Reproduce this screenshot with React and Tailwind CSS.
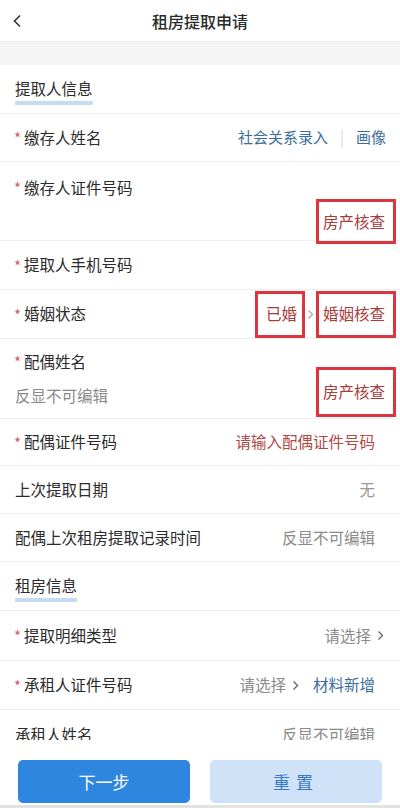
import React from "react";

const font = { fontFamily: '"Noto Sans CJK SC", "Noto Sans", sans-serif' };

function Star() {
  return <span className="mr-[3px] text-[15px] leading-none text-[#d65a60]">*</span>;
}

function Label({ req, children }) {
  return (
    <div className="flex items-center text-[15.5px] text-[#2b2b2b]">
      {req && <Star />}
      <span>{children}</span>
    </div>
  );
}

function Chevron({ className = "" }) {
  return (
    <svg width="7" height="11" viewBox="0 0 7 11" className={className}>
      <polyline points="1.5,1.5 5.5,5.5 1.5,9.5" fill="none" stroke="currentColor" strokeWidth="1.3" />
    </svg>
  );
}

function RedBox({ children, className = "" }) {
  return (
    <div className={`flex items-center justify-end border-[3px] border-[#d9363e] text-[15.5px] text-[#a83a3a] ${className}`}>
      {children}
    </div>
  );
}

function Section({ title, width }) {
  return (
    <div className="flex h-[49px] flex-col justify-center border-b border-[#efefef] px-[15px]">
      <div className="relative w-fit pt-[4px] text-[15.5px] text-[#2b2b2b]">
        {title}
        <div className="h-[4px] bg-[#c6dcf3]" style={{ width }} />
      </div>
    </div>
  );
}

export default function App() {
  return (
    <div className="flex h-[808px] w-[400px] flex-col overflow-hidden bg-white" style={font}>
      {/* header */}
      <div className="relative flex h-[42px] shrink-0 items-center justify-center border-b border-[#efefef]">
        <svg width="10" height="14" viewBox="0 0 10 14" className="absolute left-[12px] top-[14px] text-[#333]">
          <polyline points="8,1.5 2.5,7 8,12.5" fill="none" stroke="currentColor" strokeWidth="1.6" />
        </svg>
        <span className="text-[16px] font-medium text-[#2b2b2b]">租房提取申请</span>
      </div>
      <div className="h-[23px] shrink-0 bg-[#f5f5f5]" />

      <div className="flex-1 overflow-hidden">
        <Section title="提取人信息" width="78px" />

        <div className="flex h-[48px] items-center justify-between border-b border-[#efefef] pl-[14px] pr-[14px]">
          <Label req>缴存人姓名</Label>
          <div className="flex items-center text-[15px] text-[#3b6d9c]">
            <span>社会关系录入</span>
            <span className="mx-[12px] text-[#d6d6d6]">|</span>
            <span>画像</span>
          </div>
        </div>

        <div className="flex h-[79px] flex-col border-b border-[#efefef] pl-[14px] pr-[4px]">
          <div className="pt-[14px]">
            <Label req>缴存人证件号码</Label>
          </div>
          <div className="mt-auto flex justify-end">
            <RedBox className="h-[45px] w-[80px] pr-[8px]">房产核查</RedBox>
          </div>
        </div>

        <div className="flex h-[49px] items-center border-b border-[#efefef] pl-[14px]">
          <Label req>提取人手机号码</Label>
        </div>

        <div className="flex h-[49px] items-center justify-between border-b border-[#efefef] pl-[14px] pr-[4px]">
          <Label req>婚姻状态</Label>
          <div className="flex items-center">
            <RedBox className="h-[47px] w-[50px] pr-[5px]">已婚</RedBox>
            <Chevron className="mx-[2px] text-[#aaa]" />
            <RedBox className="h-[47px] w-[80px] pr-[8px]">婚姻核查</RedBox>
          </div>
        </div>

        <div className="flex h-[80px] border-b border-[#efefef] pl-[14px] pr-[4px]">
          <div className="flex flex-1 flex-col pt-[11px]">
            <Label req>配偶姓名</Label>
            <div className="mt-[11px] pl-[1px] text-[15.5px] text-[#8a8a8a]">反显不可编辑</div>
          </div>
          <div className="flex items-end pb-[1px]">
            <RedBox className="h-[50px] w-[80px] pr-[8px]">房产核查</RedBox>
          </div>
        </div>

        <div className="flex h-[47px] items-center justify-between border-b border-[#efefef] pl-[14px] pr-[25px]">
          <Label req>配偶证件号码</Label>
          <span className="text-[15.5px] text-[#b04848]">请输入配偶证件号码</span>
        </div>

        <div className="flex h-[48px] items-center justify-between border-b border-[#efefef] px-[15px] pr-[25px]">
          <Label>上次提取日期</Label>
          <span className="text-[15.5px] text-[#9a9a9a]">无</span>
        </div>

        <div className="flex h-[48px] items-center justify-between border-b border-[#efefef] px-[15px] pr-[25px]">
          <Label>配偶上次租房提取记录时间</Label>
          <span className="text-[15.5px] text-[#8a8a8a]">反显不可编辑</span>
        </div>

        <Section title="租房信息" width="62px" />

        <div className="flex h-[50px] items-center justify-between border-b border-[#efefef] pl-[14px] pr-[16px]">
          <Label req>提取明细类型</Label>
          <div className="flex items-center text-[15.5px] text-[#8a8a8a]">
            <span>请选择</span>
            <Chevron className="ml-[6px] text-[#666]" />
          </div>
        </div>

        <div className="flex h-[49px] items-center justify-between border-b border-[#efefef] pl-[14px] pr-[25px]">
          <Label req>承租人证件号码</Label>
          <div className="flex items-center text-[15.5px]">
            <span className="text-[#8a8a8a]">请选择</span>
            <Chevron className="ml-[6px] text-[#666]" />
            <span className="ml-[14px] text-[#3b6d9c]">材料新增</span>
          </div>
        </div>

        <div className="flex h-[49px] items-center justify-between pl-[15px] pr-[25px]">
          <Label>承租人姓名</Label>
          <span className="text-[15.5px] text-[#8a8a8a]">反显不可编辑</span>
        </div>
      </div>

      {/* footer */}
      <div className="flex h-[68px] shrink-0 items-start justify-between border-b-[3px] border-[#e3e3e3] bg-white px-[18px] pt-[20px]">
        <button className="h-[43px] w-[172px] rounded-[5px] bg-[#2e86df] text-[17px] text-white">下一步</button>
        <button className="h-[43px] w-[172px] rounded-[5px] bg-[#cfe2f7] text-[17px] tracking-[6px] text-[#3a78c4]">重置</button>
      </div>
    </div>
  );
}
